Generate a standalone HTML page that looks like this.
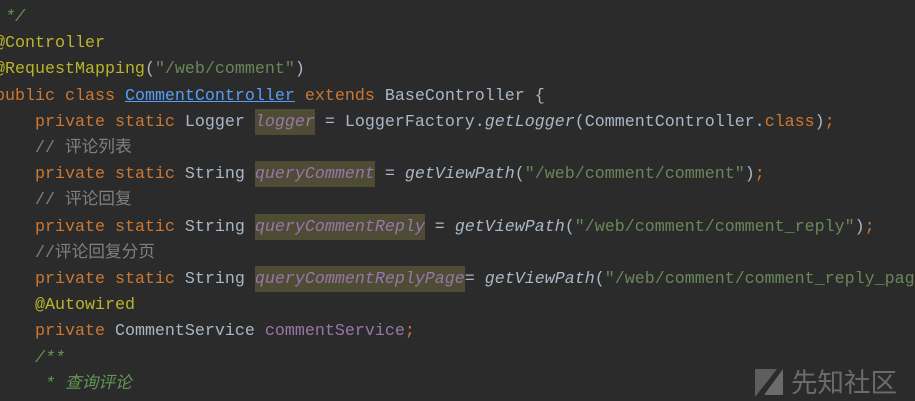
<!DOCTYPE html>
<html><head><meta charset="utf-8"><style>
body{margin:0;width:915px;height:401px;background:#2b2b2b;overflow:hidden;position:relative}
pre{margin:0;position:absolute;left:-5px;top:5px;font-family:"Liberation Mono","Noto Sans CJK SC",monospace;font-size:16.67px;line-height:26.2px;color:#a9b7c6}
.k{color:#cc7832}.a{color:#bbb529}.s{color:#6a8759}.c{color:#808080}.d{color:#629755;font-style:italic}
.f{color:#9876aa;font-style:italic}.h{background:#4f4c35;padding:4px 0 3px}.i{font-style:italic}.u{color:#589df6;text-decoration:underline}.p{color:#9876aa}
.wm{position:absolute;left:791px;top:365px;font-family:"Noto Sans CJK SC",sans-serif;font-size:26.5px;color:#6b6b6b;line-height:32px}
</style></head><body>
<pre><span class="d"> */</span>
<span class="a">@Controller</span>
<span class="a">@RequestMapping</span>(<span class="s">"/web/comment"</span>)
<span class="k">public class </span><span class="u">CommentController</span> <span class="k">extends </span>BaseController {
    <span class="k">private static </span>Logger <span class="f h">logger</span> = LoggerFactory.<span class="i">getLogger</span>(CommentController.<span class="k">class</span>)<span class="k">;</span>
    <span class="c">// 评论列表</span>
    <span class="k">private static </span>String <span class="f h">queryComment</span> = <span class="i">getViewPath</span>(<span class="s">"/web/comment/comment"</span>)<span class="k">;</span>
    <span class="c">// 评论回复</span>
    <span class="k">private static </span>String <span class="f h">queryCommentReply</span> = <span class="i">getViewPath</span>(<span class="s">"/web/comment/comment_reply"</span>)<span class="k">;</span>
    <span class="c">//评论回复分页</span>
    <span class="k">private static </span>String <span class="f h">queryCommentReplyPage</span>= <span class="i">getViewPath</span>(<span class="s">"/web/comment/comment_reply_page"</span>)<span class="k">;</span>
    <span class="a">@Autowired</span>
    <span class="k">private </span>CommentService <span class="p">commentService</span><span class="k">;</span>
    <span class="d">/**</span>
<span class="d">     * 查询评论</span></pre>
<svg style="position:absolute;left:755px;top:367px" width="30" height="31"><polygon points="0,2 22,2 0,30" fill="#5e5e5e"/><polygon points="28,2 28,28 9,28" fill="#6b6b6b"/></svg>
<div class="wm">先知社区</div>
</body></html>
